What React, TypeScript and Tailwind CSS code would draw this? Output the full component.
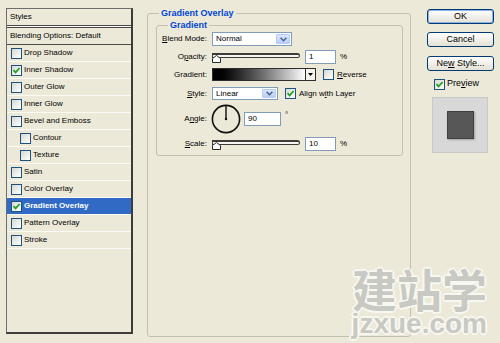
import type { ReactNode } from "react";

interface Item {
  label: string;
  checked?: boolean;
  indent?: boolean;
  selected?: boolean;
}

const ITEMS: Item[] = [
  { label: "Drop Shadow" },
  { label: "Inner Shadow", checked: true },
  { label: "Outer Glow" },
  { label: "Inner Glow" },
  { label: "Bevel and Emboss" },
  { label: "Contour", indent: true },
  { label: "Texture", indent: true },
  { label: "Satin" },
  { label: "Color Overlay" },
  { label: "Gradient Overlay", checked: true, selected: true },
  { label: "Pattern Overlay" },
  { label: "Stroke" },
];

function Check({ on }: { on?: boolean }) {
  return (
    <span className="flex h-[11px] w-[11px] shrink-0 items-center justify-center border border-[#1c5180] bg-linear-to-br from-[#d8d8d2] to-white">
      {on && (
        <svg width="9" height="9" viewBox="0 0 9 9">
          <path d="M1.5 4.2 L3.6 6.4 L7.6 2" fill="none" stroke="#21a121" strokeWidth="1.7" />
        </svg>
      )}
    </span>
  );
}

function Select({ value, w }: { value: string; w: string }) {
  return (
    <div className={`flex items-center border border-[#7f9db9] bg-white ${w}`}>
      <span className="flex-1 pl-[3px] leading-none">{value}</span>
      <span className="m-px flex h-[calc(100%-2px)] w-[14px] items-center justify-center rounded-[1px] border border-[#b6cbf5] bg-linear-to-b from-[#dbe6fd] to-[#b8cdf8]">
        <svg width="7" height="5" viewBox="0 0 7 5">
          <path d="M0.6 0.8 L3.5 3.7 L6.4 0.8" fill="none" stroke="#4d6185" strokeWidth="1.5" />
        </svg>
      </span>
    </div>
  );
}

function Slider() {
  return (
    <div className="relative h-[14px] w-[88px] shrink-0">
      <div className="mt-[3px] h-[5px] rounded-r-[3px] border border-t-2 border-[#3d3d38] bg-[#f6f5ef]" />
      {/* thumb */}
      <svg className="absolute left-0 top-[5px]" width="9" height="8" viewBox="0 0 9 8">
        <path d="M0.5 7.5 V3.5 L4.5 0.5 L8.5 3.5 V7.5 Z" fill="#fff" stroke="#2a2a2a" />
      </svg>
    </div>
  );
}

function Field({ value, w }: { value: string; w: string }) {
  return (
    <div className={`flex h-[14px] shrink-0 items-center border border-[#7f9db9] bg-white pl-[3px] leading-none ${w}`}>
      {value}
    </div>
  );
}

function Row({ label, children, className }: { label: ReactNode; children: ReactNode; className: string }) {
  return (
    <div className={`flex items-center ${className}`}>
      <span className="w-[50px] shrink-0 text-right leading-none">{label}</span>
      <div className="ml-[5px] flex items-center">{children}</div>
    </div>
  );
}

function Btn({ children, def, className }: { children: ReactNode; def?: boolean; className?: string }) {
  return (
    <button
      className={`h-[15px] w-[67px] rounded-[3px] border border-[#003c74] bg-linear-to-b from-white to-[#e4e1d4] text-[9px] leading-none text-black ${
        def ? "shadow-[inset_0_0_0_1px_#8fb0e4]" : ""
      } ${className ?? ""}`}
    >
      {children}
    </button>
  );
}

export default function App() {
  return (
    <div className="relative flex h-[343px] w-[500px] items-start overflow-hidden bg-[#ece9d8] pl-[6px] pt-[8px] font-['Liberation_Sans',Arial,sans-serif] text-[8px] text-black">
      {/* styles list */}
      <div className="flex h-[326px] w-[127px] shrink-0 flex-col border-b-2 border-l border-r-2 border-t border-b-[#3c3c3c] border-l-[#6d6d6d] border-r-[#3c3c3c] border-t-[#6d6d6d]">
        <div className="flex h-[17px] items-center border-b border-[#4a4a4a] pl-[3px]">Styles</div>
        <div className="h-px bg-[#faf9f2]" />
        <div className="flex h-[18px] items-center border-b border-t border-[#4a4a4a] pl-[3px]">
          Blending Options: Default
        </div>
        {ITEMS.map((it) => (
          <div
            key={it.label}
            className={`flex h-[17px] items-center gap-[2px] border-b border-[#fbfaf3] ${it.indent ? "pl-[13px]" : "pl-[4px]"} ${
              it.selected ? "bg-[#316ac5] font-bold text-white" : ""
            }`}
          >
            <Check on={it.checked} />
            <span>{it.label}</span>
          </div>
        ))}
      </div>

      {/* Gradient Overlay group */}
      <fieldset className="ml-[14px] h-[329px] w-[264px] shrink-0 rounded-[3px] border border-[#c3c0b0] pt-[2px]">
        <legend className="ml-[11px] px-[2px] text-[9px] font-bold leading-[10px] text-[#0046d5]">Gradient Overlay</legend>
        <fieldset className="ml-[8px] w-[247px] rounded-[3px] border border-[#c3c0b0] pb-[4px]">
          <legend className="ml-[11px] px-[2px] text-[9px] font-bold leading-[10px] text-[#0046d5]">Gradient</legend>

          <Row
            className="mt-[2px] h-[14px]"
            label={
              <>
                <span className="underline">B</span>lend Mode:
              </>
            }
          >
            <Select value="Normal" w="h-[14px] w-[80px]" />
          </Row>

          <Row
            className="mt-[4px] h-[14px]"
            label={
              <>
                O<span className="underline">p</span>acity:
              </>
            }
          >
            <Slider />
            <Field value="1" w="ml-[5px] w-[31px]" />
            <span className="ml-[4px]">%</span>
          </Row>

          <Row className="mt-[4px] h-[13px]" label="Gradient:">
            <div className="h-[13px] w-[94px] border border-[#2d2d2d] bg-linear-to-r from-black to-white" />
            <div className="flex h-[13px] w-[10px] items-center justify-center border-y border-r border-[#2d2d2d] bg-[#f4f3ee]">
              <svg width="5" height="3" viewBox="0 0 5 3">
                <path d="M0 0 H5 L2.5 3 Z" fill="#000" />
              </svg>
            </div>
            <span className="ml-[7px]">
              <Check />
            </span>
            <span className="ml-[3px]">
              <span className="underline">R</span>everse
            </span>
          </Row>

          <Row
            className="mt-[6px] h-[13px]"
            label={
              <>
                <span className="underline">S</span>tyle:
              </>
            }
          >
            <Select value="Linear" w="h-[13px] w-[66px]" />
            <span className="ml-[7px]">
              <Check on />
            </span>
            <span className="ml-[3px]">
              Align w<span className="underline">i</span>th Layer
            </span>
          </Row>

          <Row
            className="mt-[4px] h-[30px]"
            label={
              <>
                A<span className="underline">n</span>gle:
              </>
            }
          >
            <svg width="30" height="30" viewBox="0 0 30 30" className="-ml-px">
              <circle cx="15" cy="15" r="13.6" fill="none" stroke="#111" strokeWidth="1.6" />
              <line x1="15" y1="15" x2="15" y2="2" stroke="#111" strokeWidth="1.4" />
              <circle cx="15" cy="15" r="1.2" fill="#111" />
            </svg>
            <Field value="90" w="ml-[3px] w-[37px]" />
            <span className="mb-[8px] ml-[4px]">°</span>
          </Row>

          <Row
            className="mt-[3px] h-[14px]"
            label={
              <>
                <span className="underline">S</span>cale:
              </>
            }
          >
            <Slider />
            <Field value="10" w="ml-[5px] w-[31px]" />
            <span className="ml-[4px]">%</span>
          </Row>
        </fieldset>
      </fieldset>

      {/* buttons */}
      <div className="ml-[16px] mt-px flex w-[67px] shrink-0 flex-col">
        <Btn def>OK</Btn>
        <Btn className="mt-[8px]">Cancel</Btn>
        <Btn className="mt-[9px]">
          Ne<span className="underline">w</span> Style...
        </Btn>
        <div className="ml-[7px] mt-[7px] flex h-[12px] items-center gap-[2px] text-[9px]">
          <Check on />
          <span>
            Pre<span className="underline">v</span>iew
          </span>
        </div>
        <div className="ml-[5px] mt-[7px] flex h-[56px] w-[56px] items-center justify-center border border-[#c8c8c8] bg-[#d8d8d8]">
          <div className="h-[28px] w-[27px] border border-[#3f3f3f] bg-[#575757] shadow-[1px_1px_2px_rgba(0,0,0,0.25)]" />
        </div>
      </div>

      {/* watermark */}
      <div className="pointer-events-none absolute bottom-[7px] right-[13px] flex flex-col items-end leading-none text-[#c6c6c1] opacity-90 [text-shadow:2px_0_0_#fafaf5,-2px_0_0_#fafaf5,0_2px_0_#fafaf5,0_-2px_0_#fafaf5,1px_1px_0_#fafaf5,-1px_-1px_0_#fafaf5,1px_-1px_0_#fafaf5,-1px_1px_0_#fafaf5]">
        <span className="font-['Noto_Sans_CJK_SC',sans-serif] text-[45px] font-bold leading-[46px]">建站学</span>
        <span className="text-[28px] font-bold leading-[24px]">jzxue.com</span>
      </div>
    </div>
  );
}
